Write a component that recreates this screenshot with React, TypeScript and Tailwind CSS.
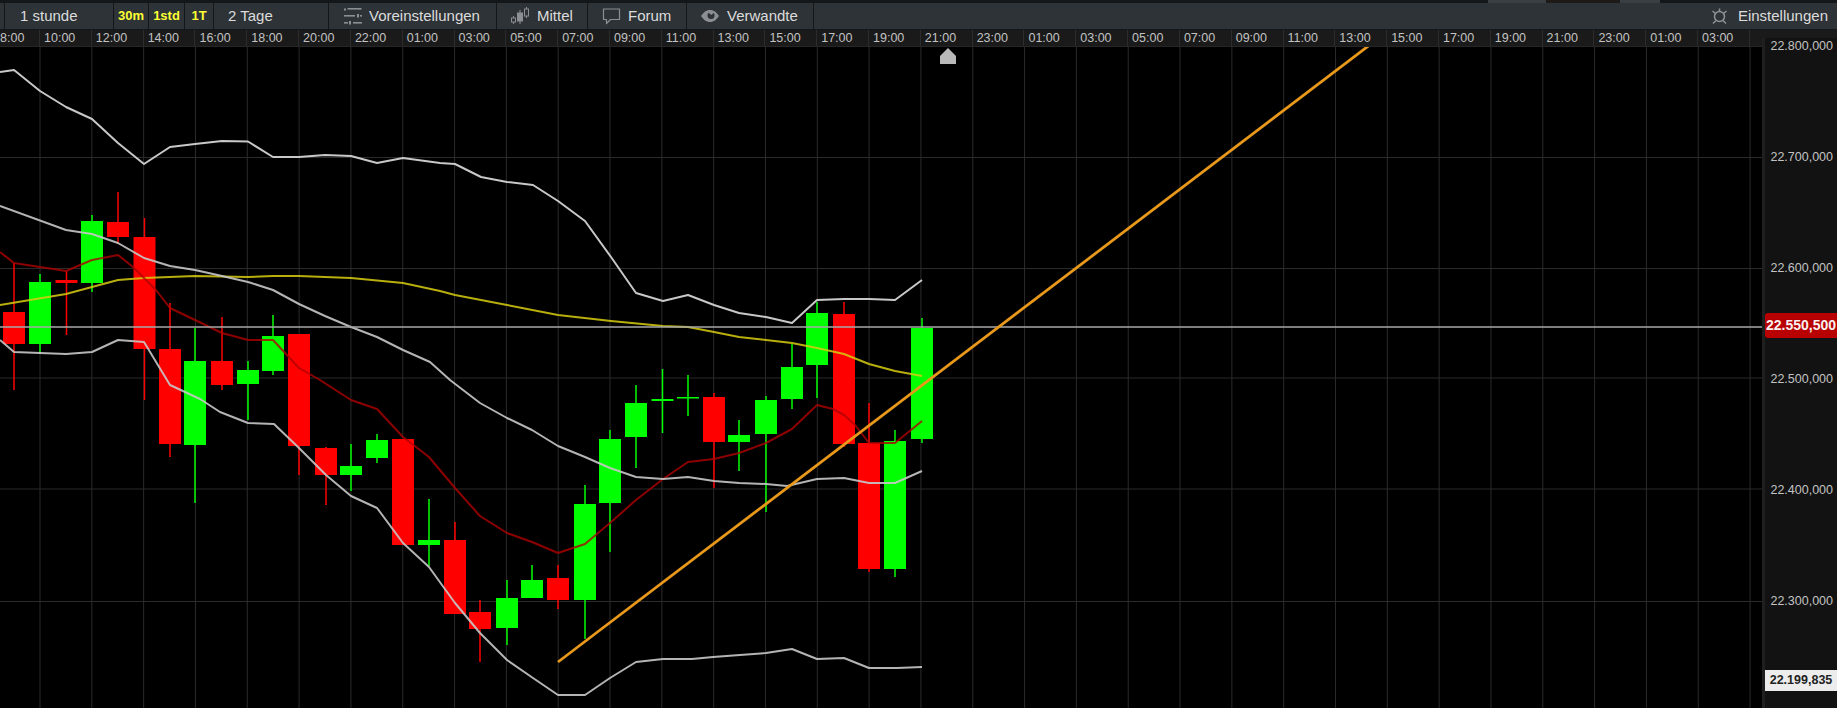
const FONT = "font-['Liberation_Sans',Arial,sans-serif]";

const GREEN = '#00ff00';
const RED = '#ff0000';

// x, body top, body bottom, wick top, wick bottom, colour
const candles: [number, number, number, number, number, string][] = [
  [14, 312, 344, 263, 390, RED],
  [40, 282, 344, 274, 354, GREEN],
  [66.5, 280, 283, 271, 335, RED],
  [92, 221, 283, 215, 292, GREEN],
  [118, 222, 237, 192, 244, RED],
  [144.5, 237, 349, 218, 400, RED],
  [170, 349, 444, 303, 457, RED],
  [195, 361, 445, 328, 503, GREEN],
  [222, 361, 385, 317, 390, RED],
  [248, 370, 384, 361, 420, GREEN],
  [273, 336, 371, 315, 375, GREEN],
  [299, 334, 446, 334, 475, RED],
  [326, 448, 475, 447, 505, RED],
  [351, 466, 475, 444, 491, GREEN],
  [377, 440, 458, 434, 463, GREEN],
  [403, 439, 545, 439, 545, RED],
  [429, 540, 545, 499, 566, GREEN],
  [455, 540, 614, 522, 614, RED],
  [480, 612, 629, 600, 662, RED],
  [507, 598, 628, 580, 645, GREEN],
  [532, 580, 598, 565, 598, GREEN],
  [558, 578, 600, 565, 609, RED],
  [585, 504, 600, 485, 639, GREEN],
  [610, 439, 503, 430, 552, GREEN],
  [636, 403, 437, 385, 468, GREEN],
  [662.5, 399, 401, 369, 433, GREEN],
  [688, 397, 398.5, 375, 416, GREEN],
  [714, 397, 442, 393, 488, RED],
  [739, 435, 442, 420, 471, GREEN],
  [766, 400, 434, 396, 512, GREEN],
  [792, 367, 399, 344, 409, GREEN],
  [817, 313, 365, 302, 398, GREEN],
  [844, 314, 444, 302, 447, RED],
  [869, 443, 569, 403, 572, RED],
  [895, 441, 569, 430, 577, GREEN],
  [922, 328, 439, 318, 443, GREEN],
];

const upperBand =
  '0,72 14,70 40,91 66,107 92,119 118,143 144,164 170,147 195,144 222,141 248,141.5 273,157 299,157 325,155 351,156 377,163 403,158 440,163 455,164 481,177 507,182 533,185 558,201 585,221 611,257 636,293 663,301 688,295 714,305 739,313 766,317 792,323 817,300 844,299 869,299 895,300 922,280';
const midBand =
  '0,206 66,230 92,234 118,243 144,258 170,266 195,270 222,276 248,282 273,290 299,304 325,316 351,327 377,337 403,350 430,362 450,380 480,403 507,418 532,430 558,446 585,457 610,468 636,477 663,479 688,477 714,481 739,483 766,484 787,486 817,479 844,478 869,483 895,483 922,471';
const lowerBand =
  '0,340 14,352 40,353 66,354 92,352 118,340 144,342 170,385 200,399 220,412 248,423 274,424 299,448 326,475 351,496 377,508 403,543 429,567 455,603 480,633 507,660 533,678 558,695 585,695 610,678 636,662 663,659 692,659 713,657 740,655 766,653 792,649 817,659 844,658 869,668 897,668 922,667';
const redAvg =
  '0,252 14,263 66,271 92,260 118,255 133,267 156,290 170,308 195,320 222,333 248,340 273,340 299,368 320,380 351,400 377,409 403,437 429,457 455,488 480,516 507,533 532,542 558,553 585,544 610,523 636,500 663,479 688,462 714,459 739,453 766,443 792,429 817,405 833,409 844,415 855,425 869,443 895,443 922,421';
const yellowAvg =
  '0,305 66,294 118,280 144,278 195,276 248,277 273,276 299,276 351,278 403,283 440,291 455,295 507,305 558,315 611,321 663,326 688,327 714,332 739,337 766,340 792,343 817,348 844,354 869,364 895,371 922,376';

const times = [
  '10:00', '12:00', '14:00', '16:00', '18:00', '20:00', '22:00', '01:00', '03:00', '05:00', '07:00', '09:00',
  '11:00', '13:00', '15:00', '17:00', '19:00', '21:00', '23:00', '01:00', '03:00', '05:00', '07:00', '09:00',
  '11:00', '13:00', '15:00', '17:00', '19:00', '21:00', '23:00', '01:00', '03:00',
];
const gridX = Array.from({ length: 34 }, (_, i) => 40 + i * 51.82);
const gridY = [157.5, 268.5, 378, 489, 601.5];
const prices = ['22.800,000', '22.700,000', '22.600,000', '22.500,000', '22.400,000', '22.300,000'];

const SlidersIcon = () => (
  <svg width="18" height="18" viewBox="0 0 18 18" fill="#8b8f93" className="shrink-0">
    <rect x="0" y="1.5" width="2" height="2" />
    <rect x="3.5" y="1" width="14" height="1.6" />
    <rect x="0" y="8" width="11" height="1.6" />
    <rect x="13" y="7" width="2" height="3.5" />
    <rect x="16" y="8" width="2" height="1.6" />
    <rect x="0" y="15" width="4" height="1.6" />
    <rect x="5" y="14" width="2" height="3.5" />
    <rect x="9" y="15" width="9" height="1.6" />
  </svg>
);

const CandlesIcon = () => (
  <svg width="18" height="18" viewBox="0 0 18 18" fill="none" stroke="#8b8f93" strokeWidth="1" className="shrink-0">
    <path d="M2.5 9v8M9 3v14M15.5 0v11" />
    <rect x="0.5" y="11" width="4" height="4" fill="#2e3337" />
    <rect x="6.5" y="6" width="5" height="8" fill="#8b8f93" />
    <rect x="13.5" y="2" width="4" height="7" fill="#2e3337" />
  </svg>
);

const BubbleIcon = () => (
  <svg width="19" height="17" viewBox="0 0 19 17" fill="none" stroke="#8b8f93" strokeWidth="1.2" className="shrink-0">
    <path d="M1.5 1h16v10.5H8.5L4.5 15.5v-4h-3z" strokeLinejoin="round" />
  </svg>
);

const EyeIcon = () => (
  <svg width="18" height="14" viewBox="0 0 18 14" className="shrink-0">
    <path d="M0 7C3 2.500 6 1 9 1s6 1.500 9 6c-3 4.500-6 6-9 6S3 11.500 0 7z" fill="#8b8f93" />
    <circle cx="10" cy="6.500" r="3.500" fill="#2e3337" />
    <path d="M7 3.500a5 5 0 0 1 6 0l-2.500 2.500z" fill="#8b8f93" />
  </svg>
);

const GearIcon = () => (
  <svg width="17" height="17" viewBox="0 0 17 17" fill="none" stroke="#8f9397" strokeWidth="1.5" className="shrink-0">
    <circle cx="8.500" cy="8.500" r="5" />
    <path d="M8.500 0.500v3M1.500 3l3 2.500M15.500 3l-3 2.500M2 15.500l3-3M15 15.500l-3-3" />
  </svg>
);

const App = () => {
  return (
    <div className={`flex flex-col h-screen w-full overflow-hidden bg-black ${FONT}`}>
      {/* top strip */}
      <div className="flex h-[3px] shrink-0 bg-[#14171a]">
        <div className="w-[1488px]" />
        <div className="w-[58px] bg-[#3a3f44]" />
        <div className="w-[74px] bg-[#1d1a18]" />
        <div className="w-[40px] bg-[#3a3f44]" />
      </div>

      {/* toolbar */}
      <div className="flex h-[27px] shrink-0 items-stretch bg-[#2e3337] border-b border-[#14171a] text-[15px] text-[#dcdcdc]">
        <div className="w-[5px] border-r border-[#14171a]" />
        <div className="flex w-[109px] items-center pl-[15px] border-r border-[#14171a]">1 stunde</div>
        <div className="flex w-[35px] items-center justify-center border-r border-[#14171a] text-[13px] font-bold text-[#ffff33]">30m</div>
        <div className="flex w-[36px] items-center justify-center border-r border-[#14171a] text-[13px] font-bold text-[#ffff33]">1std</div>
        <div className="flex w-[29px] items-center justify-center border-r border-[#14171a] text-[13px] font-bold text-[#ffff33]">1T</div>
        <div className="flex w-[115px] items-center pl-[14px] border-r border-[#14171a]">2 Tage</div>
        <div className="flex w-[168px] items-center pl-[15px] gap-[7px] border-r border-[#14171a]">
          <SlidersIcon />
          Voreinstellungen
        </div>
        <div className="flex w-[91px] items-center pl-[14px] gap-[8px] border-r border-[#14171a]">
          <CandlesIcon />
          Mittel
        </div>
        <div className="flex w-[99px] items-center pl-[14px] gap-[7px] border-r border-[#14171a]">
          <BubbleIcon />
          Forum
        </div>
        <div className="flex w-[127px] items-center pl-[14px] gap-[8px] border-r border-[#14171a]">
          <EyeIcon />
          Verwandte
        </div>
        <div className="flex flex-1 items-center justify-end pr-[9px] gap-[10px]">
          <GearIcon />
          Einstellungen
        </div>
      </div>

      {/* time axis */}
      <div className="flex h-[17px] shrink-0 bg-[#1a1a1a] border-b border-[#262626] text-[12.5px] leading-[17px] text-[#c2c2c2]">
        <div className="w-[40px] shrink-0 border-r border-[#2c2c2c]">8:00</div>
        {times.map((t, i) => (
          <div key={i} className="w-[51.82px] shrink-0 pl-[4px] border-r border-[#2c2c2c]">
            {t}
          </div>
        ))}
      </div>

      <div className="flex flex-1 min-h-0">
        {/* chart */}
        <svg width="1762" height="661" viewBox="0 47 1762 661" className="block shrink-0 bg-black">
          {gridX.map((x) => (
            <line key={x} x1={x} y1="47" x2={x} y2="708" stroke="#2b2b2b" strokeWidth="1" />
          ))}
          {gridY.map((y) => (
            <line key={y} x1="0" y1={y} x2="1762" y2={y} stroke="#2b2b2b" strokeWidth="1" />
          ))}

          {candles.map(([x, top, bottom, wickTop, wickBottom, color]) => (
            <g key={x}>
              <line x1={x} y1={wickTop} x2={x} y2={wickBottom} stroke={color} strokeWidth="1.5" />
              <rect x={x - 11} y={top} width="22" height={bottom - top} fill={color} />
            </g>
          ))}

          <g fill="none" strokeLinejoin="round">
            <polyline points={yellowAvg} stroke="#d8cc10" strokeOpacity="0.85" strokeWidth="2" />
            <polyline points={redAvg} stroke="#b00000" strokeOpacity="0.8" strokeWidth="2" />
            <polyline points={upperBand} stroke="#c8c8c8" strokeWidth="2" />
            <polyline points={midBand} stroke="#c8c8c8" strokeOpacity="0.9" strokeWidth="2" />
            <polyline points={lowerBand} stroke="#c8c8c8" strokeOpacity="0.9" strokeWidth="2" />
          </g>

          <line x1="0" y1="327" x2="1762" y2="327" stroke="#a8a8a8" strokeWidth="1.4" />
          <line x1="558" y1="662" x2="1369" y2="45.500" stroke="#e8981a" strokeWidth="2.800" />
          <polygon points="948,48 956,56 956,64 940,64 940,56" fill="#b9b9b9" />
        </svg>

        {/* price axis */}
        <div className="relative z-10 -mt-[9px] flex-1 overflow-hidden bg-[#121212] border-l-[3px] border-[#1f1f1f] text-[12.5px] text-[#c2c2c2]">
          <div className="-mt-[47.500px] flex flex-col items-end pr-[4px]">
            {prices.map((p) => (
              <div key={p} className="flex h-[111.100px] items-center">
                {p}
              </div>
            ))}
          </div>
          <div className="absolute left-0 right-0 top-[275px] flex h-[25px] items-center justify-center rounded-l-[3px] bg-[#b80000] text-[14px] font-bold text-[#f8f0f0]">
            22.550,500
          </div>
          <div className="absolute left-0 right-0 top-[632px] flex h-[21px] items-center justify-center bg-[#ececec] text-[12.5px] font-bold text-[#222222]">
            22.199,835
          </div>
        </div>
      </div>
    </div>
  );
};

export default App;
